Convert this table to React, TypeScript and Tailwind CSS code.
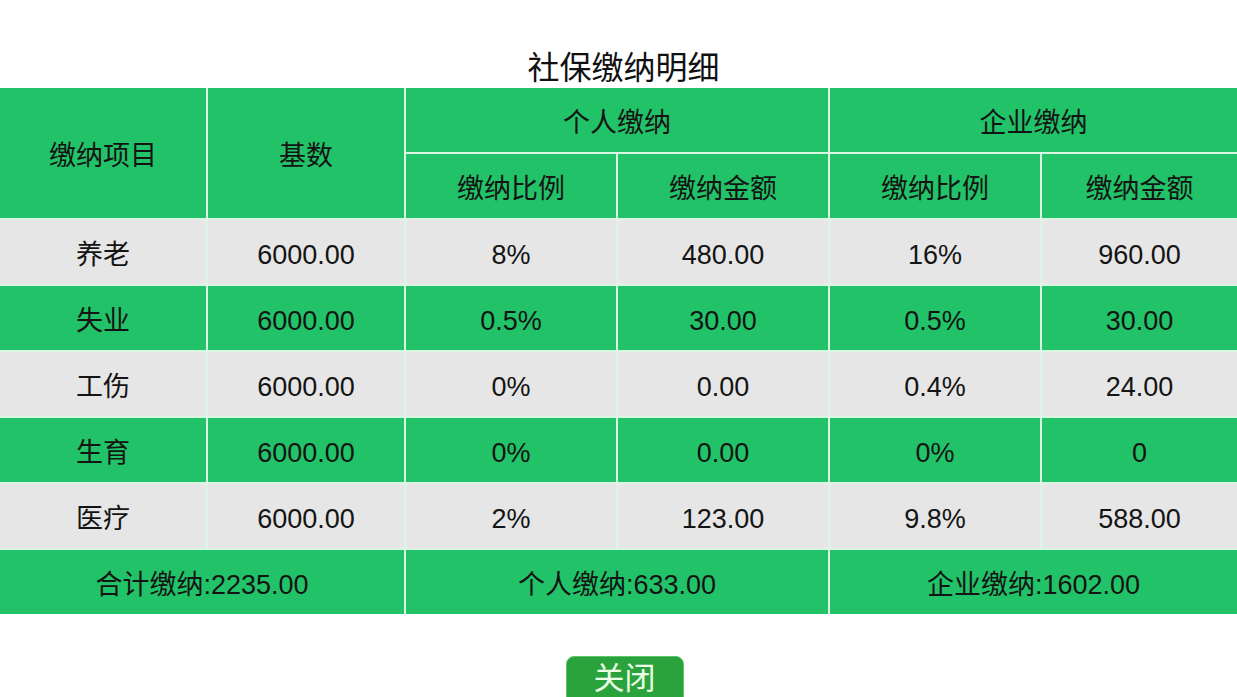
import React from 'react';

const rows = [
  ['养老', '6000.00', '8%', '480.00', '16%', '960.00'],
  ['失业', '6000.00', '0.5%', '30.00', '0.5%', '30.00'],
  ['工伤', '6000.00', '0%', '0.00', '0.4%', '24.00'],
  ['生育', '6000.00', '0%', '0.00', '0%', '0'],
  ['医疗', '6000.00', '2%', '123.00', '9.8%', '588.00'],
];

const green = 'bg-[#22c268]';
const cell = 'flex items-center justify-center pt-[7px] text-[27px] text-[#141414]';

export default function App() {
  return (
    <div
      className="w-[1237px] h-[697px] overflow-hidden bg-white flex flex-col items-center pt-[48px]"
      style={{ fontFamily: '"Liberation Sans", "Noto Sans CJK SC", sans-serif' }}
    >
      <h1 className="h-[40px] leading-[40px] text-[32px] text-[#111] font-normal ml-[10px]">社保缴纳明细</h1>

      {/* Table */}
      <div className="w-full grid grid-cols-[206px_196px_210px_210px_210px_1fr] auto-rows-[64px] gap-[2px] bg-[#dcf6e4]">
        <div className={`${cell} ${green} row-span-2`}>缴纳项目</div>
        <div className={`${cell} ${green} row-span-2`}>基数</div>
        <div className={`${cell} ${green} col-span-2`}>个人缴纳</div>
        <div className={`${cell} ${green} col-span-2`}>企业缴纳</div>
        <div className={`${cell} ${green}`}>缴纳比例</div>
        <div className={`${cell} ${green}`}>缴纳金额</div>
        <div className={`${cell} ${green}`}>缴纳比例</div>
        <div className={`${cell} ${green}`}>缴纳金额</div>

        {rows.map((r, i) =>
          r.map((v, j) => (
            <div key={`${i}-${j}`} className={`${cell} ${i % 2 === 0 ? 'bg-[#e6e6e6]' : green}`}>
              {v}
            </div>
          ))
        )}

        <div className={`${cell} ${green} col-span-2`}>合计缴纳:2235.00</div>
        <div className={`${cell} ${green} col-span-2`}>个人缴纳:633.00</div>
        <div className={`${cell} ${green} col-span-2`}>企业缴纳:1602.00</div>
      </div>

      <button className="mt-[42px] ml-[12px] w-[118px] h-[48px] shrink-0 rounded-[8px] bg-[#2ba33c] border border-[#5cc46a] text-[#eaffe6] text-[31px] leading-[44px] flex items-start justify-center">
        关闭
      </button>
    </div>
  );
}
